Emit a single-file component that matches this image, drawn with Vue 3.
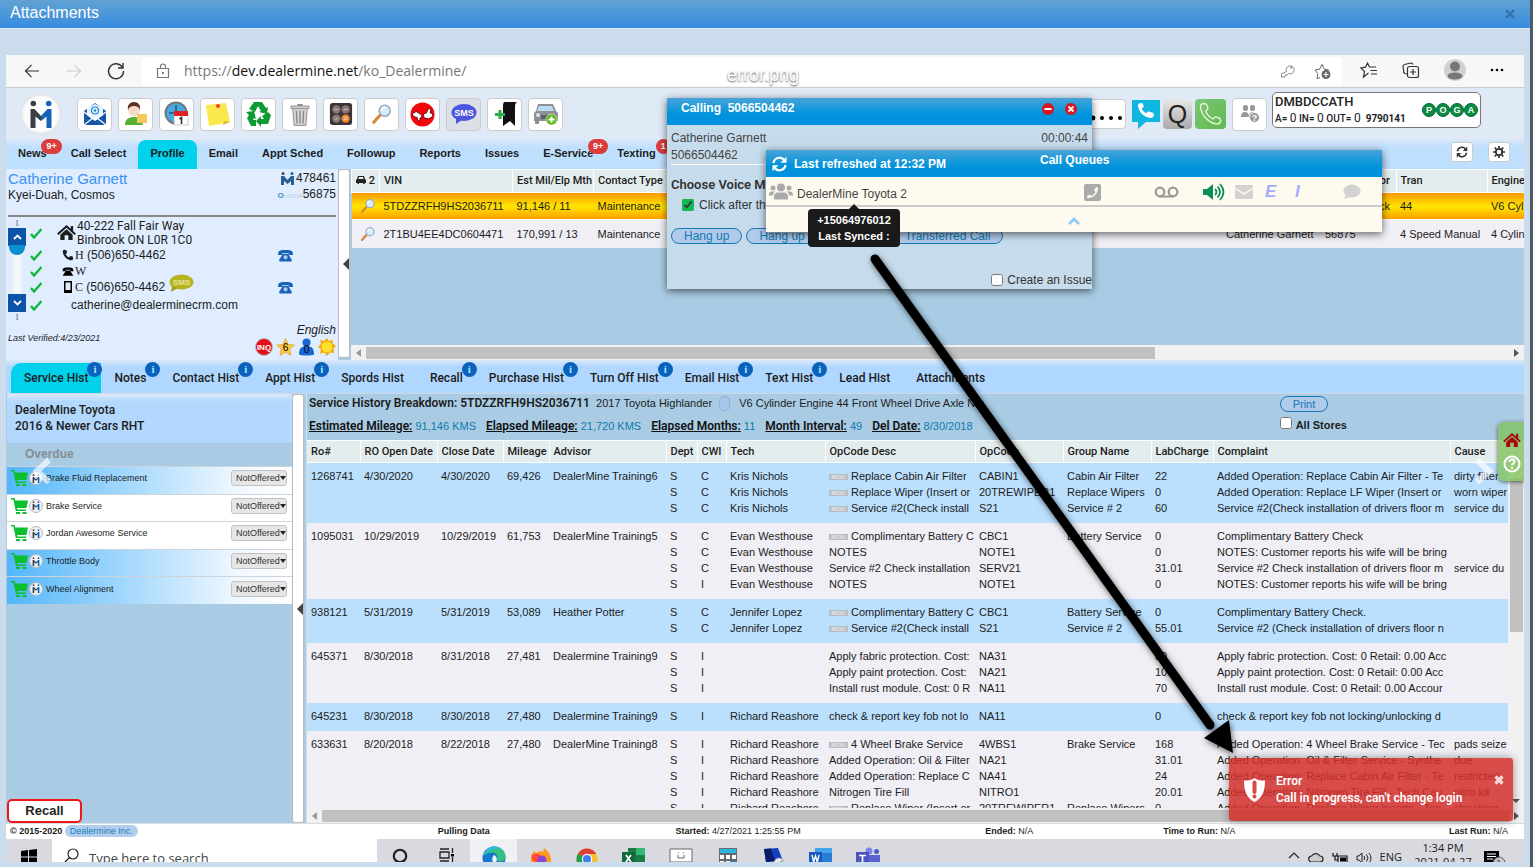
<template>
  <div class="page">
    <!-- shared icons -->
    <svg class="sprite" aria-hidden="true">
      <symbol id="lens" viewBox="0 0 24 24">
        <path d="M3 21l8-9" stroke="#d9843b" stroke-width="3.4" stroke-linecap="round" />
        <circle cx="15" cy="8.500" r="6" fill="#d8edfc" stroke="#9aabc4" stroke-width="1.800" />
        <path d="M11.500 8a4 4 0 0 1 4-3.500" fill="none" stroke="#fff" stroke-width="1.600" />
      </symbol>
      <symbol id="mine" viewBox="0 0 21 28">
        <path d="M0 9h4l6.500 7v5L5 16.500V28H0z" fill="#3b3f45" />
        <path d="M21 9h-4l-6.500 7v5l5.500-4.500V28h5z" fill="#1463b5" />
        <circle cx="2.800" cy="3.500" r="2.800" fill="#3b3f45" />
        <circle cx="18.200" cy="3.500" r="2.800" fill="#1463b5" />
      </symbol>
      <symbol id="tick" viewBox="0 0 12 12">
        <path d="M1 7l3 3.500L11.500 2" fill="none" stroke="#10b73a" stroke-width="2.400" />
      </symbol>
      <symbol id="desk-phone" viewBox="0 0 18 14">
        <path d="M1 5C1 1 5 1 9 1s8 0 8 4v1.500h-4.500V4.500h-7v2H1z" fill="#1b62b8" />
        <path d="M6 5.500h6l4 6.500c0 1-1 1.500-2 1.500H4c-1 0-2-.5-2-1.500z" fill="#1b62b8" />
        <circle cx="9" cy="9" r="2.200" fill="#a8cdf5" />
      </symbol>
      <symbol id="sync" viewBox="0 0 16 16">
        <path d="M2 7a6 6 0 0 1 10.500-3.200M14 9a6 6 0 0 1-10.500 3.200" fill="none" stroke="currentColor" stroke-width="2.200" />
        <path d="M15 .8v6H9zM1 15.200v-6h6z" fill="currentColor" />
      </symbol>
      <symbol id="house" viewBox="0 0 20 18">
        <path d="M10 1L0 10l1.500 1.600L10 4l8.500 7.600L20 10l-3-2.700V2h-2.500v3z" fill="currentColor" />
        <path d="M10 5.500L3.500 11.300V17H8v-5h4v5h4.500v-5.700z" fill="currentColor" />
      </symbol>
      <symbol id="group" viewBox="0 0 24 17">
        <g fill="currentColor">
          <circle cx="12" cy="4.500" r="4" /><circle cx="4" cy="5" r="2.500" /><circle cx="20" cy="5" r="2.500" />
          <path d="M5 16.500v-3c0-3 2-4 4-4h6c2 0 4 1 4 4v3zM0 12.500c0-3 1-4 3-4h3.500C4.500 9.500 4 11 4 12.500zM24 12.500c0-3-1-4-3-4h-3.500c2 1 2.500 2.500 2.500 4z" />
        </g>
      </symbol>
      <symbol id="handset" viewBox="0 0 16 16">
        <path d="M3 1l3 .6.8 3.400-2 1.600c.8 2 2.200 3.500 4.500 4.600l1.700-2 3.400.9.500 3.200c-.5 1.300-1.600 1.800-3 1.600C6.500 14.300 1.700 9.500 1 4c-.1-1.600.7-2.600 2-3z" fill="currentColor" />
      </symbol>
      <symbol id="cart" viewBox="0 0 18 18">
        <path d="M0 1h3.500l.8 2.500H17L15.500 11H6l.3 1.500H15v1.600H4.800L2.400 2.600H0z" fill="#0cbf2c" />
        <path d="M5 15h4v2H5zM11.500 15h4v2h-4z" fill="#0cbf2c" />
      </symbol>
    </svg>

    <main class="modal">
      <header class="modal-head">
        <h1>Attachments</h1>
        <button type="button" class="modal-close" aria-label="Close">
          <svg width="10" height="10" viewBox="0 0 10 10"><path d="M1 1l8 8M9 1L1 9" stroke="#3272ae" stroke-width="2.400" /></svg>
        </button>
      </header>

      <div class="shot">
        <!-- browser bar -->
        <div class="browser">
          <button type="button" class="plain" aria-label="Back">
            <svg width="16" height="14" viewBox="0 0 18 16"><path d="M17 8H2M8.500 1L1.500 8l7 7" fill="none" stroke="#333" stroke-width="1.300" /></svg>
          </button>
          <button type="button" class="plain" aria-label="Forward">
            <svg width="16" height="14" viewBox="0 0 18 16"><path d="M1 8h15M9.500 1l7 7-7 7" fill="none" stroke="#ccc" stroke-width="1.300" /></svg>
          </button>
          <button type="button" class="plain" aria-label="Reload">
            <svg width="18" height="18" viewBox="0 0 18 18"><path d="M15.500 5.500A7.500 7.500 0 1 0 16.500 9M16 1v5h-5" fill="none" stroke="#333" stroke-width="1.400" /></svg>
          </button>
          <div class="address">
            <svg width="14" height="16" viewBox="0 0 14 16"><path d="M1.500 5.500h11v9h-11zM4.500 5.500v-2a2.500 2.500 0 0 1 5 0v2" fill="none" stroke="#777" stroke-width="1.200" /><circle cx="7" cy="10" r="1" fill="#555" /></svg>
            <span class="url">https://<b>dev.dealermine.net</b>/ko_Dealermine/</span>
            <svg width="16" height="16" viewBox="0 0 16 16"><path d="M6.500 8.500a4 4 0 1 1 2 2L7 12H5v2H1.500v-3z" fill="none" stroke="#888" /><circle cx="11.200" cy="4.800" r="1" fill="#888" /></svg>
            <svg width="18" height="17" viewBox="0 0 18 17"><path d="M6 14.500l-3 1.200.8-5L1 7l4.500-.8L8 1.500l2.300 4.700L15 7" fill="none" stroke="#666" /><circle cx="12" cy="11.500" r="4.500" fill="#666" /><path d="M12 9v5M9.500 11.500h5" stroke="#fff" stroke-width="1.200" /></svg>
          </div>
          <div class="browser-tools">
            <svg width="18" height="16" viewBox="0 0 18 16"><path d="M8.500 11L3.500 15l1-5.500L1 6l4.500-.8L7.500 1l2 4H16M10.500 8.500H17M11 12h6" fill="none" stroke="#333" stroke-width="1.200" /></svg>
            <svg width="18" height="17" viewBox="0 0 18 17"><path d="M5 12L3 11.500a2 2 0 0 1-1.300-2.500L1 4.500a2 2 0 0 1 1.500-2L9 1a2 2 0 0 1 2 1.500" fill="none" stroke="#333" stroke-width="1.200" /><rect x="5.500" y="4.500" width="11" height="11" rx="2" fill="none" stroke="#333" stroke-width="1.200" /><path d="M11 7v6M8 10h6" stroke="#333" stroke-width="1.200" /></svg>
            <svg width="22" height="22" viewBox="0 0 22 22"><circle cx="11" cy="11" r="11" fill="#d4d0cd" /><circle cx="11" cy="7.500" r="5" fill="#777" /><ellipse cx="11" cy="17" rx="7.500" ry="3.500" fill="#777" /></svg>
            <svg width="14" height="4" viewBox="0 0 14 4"><circle cx="2" cy="2" r="1.300" /><circle cx="7" cy="2" r="1.300" /><circle cx="12" cy="2" r="1.300" /></svg>
          </div>
        </div>

        <!-- app toolbar -->
        <div class="toolbar">
          <span class="logo"><svg width="22" height="28"><use href="#mine" /></svg></span>
          <div class="tools">
            <button type="button" aria-label="Mail">
              <svg width="26" height="26" viewBox="0 0 26 26"><path d="M2 10L13 2l11 8v14H2z" fill="#1b5fae" /><path d="M5 7l8-4 8 4v9l-8 4-8-4z" fill="#e8f4fc" /><path d="M2 12l11 8 11-8v12H2z" fill="#1558a8" /><path d="M2 24l9-7M15 17l9 7M2 11l11 8 11-8" fill="none" stroke="#fff" stroke-width="1.200" /><circle cx="13" cy="9.500" r="3.500" fill="none" stroke="#1b86d8" stroke-width="1.200" /><circle cx="13" cy="9.500" r="1.300" fill="#1b86d8" /></svg>
            </button>
            <button type="button" aria-label="Contact note">
              <svg width="26" height="26" viewBox="0 0 26 26"><path d="M2 24c0-6 4-8 9-8s8 2 9 8z" fill="#55b034" /><circle cx="11" cy="9" r="6" fill="#f6d9c6" /><path d="M5 9c-1-5 2-8 6-8s7 3 6 8c-1-3-3-4-6-4s-5 1-6 4z" fill="#5d2f26" /><path d="M14 13h10v9H14z" fill="#f7c65c" /></svg>
            </button>
            <button type="button" aria-label="Schedule">
              <svg width="26" height="26" viewBox="0 0 26 26"><circle cx="12" cy="12" r="10.500" fill="#49a9df" stroke="#6f7881" stroke-width="2" /><path d="M12 4v8H5" stroke="#23577f" stroke-width="1.500" fill="none" /><path d="M10 12h14v12H10z" fill="#fff" stroke="#aaa" stroke-width=".6" /><path d="M10 10h14v5H10z" fill="#e01f26" /><path d="M15.500 18l2-1.500V23" stroke="#333" stroke-width="1.600" fill="none" /></svg>
            </button>
            <button type="button" aria-label="Notes">
              <svg width="26" height="26" viewBox="0 0 26 26"><path d="M1 4l20-2 4 19-9 2-12 2z" fill="#fbe84f" /><path d="M18 24l7-3-6-1z" fill="#d6b83a" /><circle cx="13" cy="5" r="2" fill="#e8442b" /></svg>
            </button>
            <button type="button" aria-label="Recycle">
              <svg width="26" height="26" viewBox="0 0 26 26"><g fill="#0d9c33"><path d="M8 1h8l4 6 2-1-1 7-8-2 2-1-3-5-3 6-6-3z" /><path d="M25 14l-3 9h-7v3l-5-6 5-5v3h3l-2-3 6-4z" /><path d="M0 11l8-1 2 8-2-1-1 2h3v6H5L1 17l2-3z" /></g></svg>
            </button>
            <button type="button" aria-label="Delete">
              <svg width="20" height="25" viewBox="0 0 22 26"><path d="M3 6h16l-1.500 19h-13z" fill="#d4d4d4" stroke="#888" /><path d="M7 9l.7 14M11 9v14M15 9l-.7 14" stroke="#888" stroke-width="1.500" /><path d="M1 3.500h20v3H1z" fill="#ccc" stroke="#888" stroke-width=".8" /><path d="M8 1.500h6v2H8z" fill="#888" /></svg>
            </button>
            <button type="button" aria-label="Calculator">
              <svg width="24" height="24" viewBox="0 0 26 26"><rect x="1" y="1" width="24" height="24" rx="3" fill="#3a3536" /><circle cx="8" cy="8" r="4.500" fill="#8b7873" /><circle cx="18" cy="8" r="4.500" fill="#8b7873" /><circle cx="8" cy="18" r="4.500" fill="#8b7873" /><circle cx="18" cy="18" r="4.500" fill="#f08a2c" /><path d="M6 8h4M16 8h4M16 17h4M16 19h4M7 17l2 2M9 17l-2 2" stroke="#ddd" stroke-width=".9" /></svg>
            </button>
            <button type="button" aria-label="Search"><svg width="22" height="22"><use href="#lens" /></svg></button>
            <button type="button" aria-label="Rating">
              <svg width="25" height="25" viewBox="0 0 26 26"><circle cx="13" cy="13" r="12.500" fill="#f3060b" /><path d="M2.500 12l4-2 5 3 1 3-2 .5-.5 3.500-2-1-.5-3-4-1z" fill="#fff" stroke="#400" stroke-width=".8" /><path d="M23.500 15l-4 2.500-5-1-.5-4 3-1 2.500-5 2 .5-.5 4.500 2.500.5z" fill="#fff" stroke="#400" stroke-width=".8" /></svg>
            </button>
            <button type="button" class="dim" aria-label="Text message">
              <svg width="26" height="22" viewBox="0 0 26 22"><ellipse cx="13" cy="9.500" rx="12.500" ry="8.500" fill="#4b55dd" /><path d="M5 15l0 6 6-4z" fill="#4b55dd" /><text x="13" y="13" text-anchor="middle" class="sms-text big" fill="#fff">SMS</text></svg>
            </button>
            <button type="button" aria-label="Bookmark">
              <svg width="26" height="26" viewBox="0 0 26 26"><path d="M12 1h13c-2 1-2 3-2 6v18l-5-5-7 5V6c0-2 0-3 1-5z" fill="#111" /><path d="M8 9v9M3 13.500h10" stroke="#2cae4c" stroke-width="3" /></svg>
            </button>
            <button type="button" aria-label="Add vehicle">
              <svg width="26" height="26" viewBox="0 0 26 26"><path d="M5 3h15l3 7 2 2v8h-2v3h-4v-3H6v3H2v-3H1v-8l2-2z" fill="#8d9196" /><path d="M6 5h13l2 5H4z" fill="#b9ddf0" /><path d="M8 14h10v4H8z" fill="#5d6165" /><circle cx="5" cy="14" r="2" fill="#dfe6ea" /><circle cx="18.500" cy="18.500" r="5.500" fill="#5fb81e" stroke="#fff" stroke-width=".6" /><path d="M18.500 15.500v6M15.500 18.500h6" stroke="#fff" stroke-width="1.800" /></svg>
            </button>
          </div>
          <div class="phone-tools">
            <button type="button" class="wide" aria-label="Password">
              <svg width="32" height="4" viewBox="0 0 32 4"><circle cx="3" cy="2" r="2.400" /><circle cx="12" cy="2" r="2" /><circle cx="21" cy="2" r="2" /><circle cx="30" cy="2" r="2" /></svg>
            </button>
            <button type="button" class="tile" aria-label="Call">
              <svg width="28" height="30" viewBox="0 0 28 30"><path d="M0 1h28v22H14l-8 7v-7H0z" fill="#0fb6e0" /><path d="M8 4l3 .6.8 3.400-2 1.600c.8 2 2.200 3.500 4.500 4.600l1.700-2 5.400 1.900.5 2.200c-.5 1.800-1.600 2.800-4 2.600C11.500 18 6.700 12.500 6 7c-.1-1.600.7-2.600 2-3z" fill="#fff" /></svg>
            </button>
            <button type="button" class="tile q">Q</button>
            <button type="button" class="tile green" aria-label="Dial">
              <svg width="24" height="26" viewBox="0 0 16 16"><path d="M3 1l2 .6 1 3-1.600 1.600c.8 2 2.600 4 5 5.100l1.600-1.500 3 1.200.5 2c-.5 1.300-1.600 1.800-3 1.600C6.500 14 1.700 9 1 3.500c-.1-1.300.7-2.300 2-2.500z" fill="none" stroke="#e7f7de" stroke-width=".9" /></svg>
            </button>
            <button type="button" class="users" aria-label="Agents">
              <svg width="20" height="18" viewBox="0 0 20 18"><g fill="#999"><rect x="3" y="0" width="5" height="6" rx="2" /><rect x="10" y="0" width="5" height="6" rx="2" /><path d="M1 12c0-4 2-5 4-5s4 1 4 5zM9 12c0-4 2-5 4-5s4 1 4 5z" /><circle cx="14.500" cy="12.500" r="5" stroke="#fff" /></g><text x="14.500" y="16" text-anchor="middle" class="tiny-q" fill="#fff">?</text></svg>
            </button>
            <div class="agent">
              <div>
                <div class="agent-name">DMBDCCATH</div>
                <div class="agent-stats">A= <i>0</i> IN= <i>0</i> OUT= <i>0</i> &nbsp;<b>9790141</b></div>
              </div>
              <div class="poga"><span v-for="l in 'POGA'" :key="l">{{ l }}</span></div>
            </div>
          </div>
        </div>

        <!-- main tabs -->
        <nav class="main-nav">
          <button v-for="t in mainTabs" :key="t.name" type="button" :class="{ active: t.name === mainTab }" @click="mainTab = t.name">
            {{ t.name }}<span v-if="t.badge" class="count">{{ t.badge }}</span>
          </button>
          <div class="nav-actions">
            <button type="button" aria-label="Refresh"><svg width="12" height="12"><use href="#sync" /></svg></button>
            <button type="button" aria-label="Settings">
              <svg width="12" height="12" viewBox="0 0 12 12"><circle cx="6" cy="6" r="3.200" fill="none" stroke="#333" stroke-width="1.800" /><path d="M6 0v2M6 10v2M0 6h2M10 6h2M1.700 1.700l1.500 1.500M8.800 8.800l1.500 1.500M1.700 10.300l1.500-1.500M8.800 3.200l1.500-1.500" stroke="#333" stroke-width="1.700" /></svg>
            </button>
          </div>
        </nav>

        <!-- customer + vehicles -->
        <section class="top">
          <div class="customer">
            <div class="who">
              <div>
                <a href="#" class="cust-name">Catherine Garnett</a>
                <div class="cust-alt">Kyei-Duah, Cosmos</div>
              </div>
              <div class="ids">
                <div><svg width="13" height="13" viewBox="0 0 13 13"><path d="M0 4h3l3.500 4L10 4h3v9h-3V9l-3.500 3L3 9v4H0z" fill="#2c5f94" /><circle cx="2" cy="1.500" r="1.500" fill="#444" /><circle cx="11" cy="1.500" r="1.500" fill="#1463b5" /></svg>478461</div>
                <div><span class="quorum"><em>O</em>UORUM</span>56875</div>
              </div>
            </div>
            <div class="contact">
              <div class="pager">
                <small>1</small>
                <button type="button" aria-label="Previous"><svg width="9" height="6" viewBox="0 0 9 6"><path d="M1 5l3.500-3.500L8 5" fill="none" stroke="#fff" stroke-width="1.800" /></svg></button>
                <span class="track"><span class="knob"></span></span>
                <button type="button" aria-label="Next"><svg width="9" height="6" viewBox="0 0 9 6"><path d="M1 1l3.500 3.500L8 1" fill="none" stroke="#fff" stroke-width="1.800" /></svg></button>
                <small>1</small>
              </div>
              <ul class="lines">
                <li class="tall">
                  <svg class="ok" width="12" height="12"><use href="#tick" /></svg>
                  <svg class="kind home" width="19" height="17"><use href="#house" /></svg>
                  <span>40-222 Fall Fair Way<br>Binbrook ON L0R 1C0</span>
                </li>
                <li>
                  <svg class="ok" width="12" height="12"><use href="#tick" /></svg>
                  <svg class="kind" width="12" height="12"><use href="#handset" /></svg>
                  <span><i>H</i> (506)650-4462</span>
                  <svg class="dial" width="17" height="13"><use href="#desk-phone" /></svg>
                </li>
                <li>
                  <svg class="ok" width="12" height="12"><use href="#tick" /></svg>
                  <svg class="kind" width="12" height="11" viewBox="0 0 18 14"><path d="M1 5C1 1 5 1 9 1s8 0 8 4v1.500h-4.500V4.500h-7v2H1zM6 5.500h6l5 8H1z" /></svg>
                  <span><i>W</i></span>
                </li>
                <li>
                  <svg class="ok" width="12" height="12"><use href="#tick" /></svg>
                  <svg class="kind" width="12" height="12" viewBox="0 0 12 12"><path d="M2 0h8v12H2zM3.500 1.500v7.500h5V1.500z" fill-rule="evenodd" /></svg>
                  <span><i>C</i> (506)650-4462</span>
                  <svg class="sms" width="25" height="19" viewBox="0 0 25 19"><ellipse cx="12.500" cy="8" rx="12" ry="7.500" fill="#b6b41f" /><path d="M3 12l-1 6 7-4z" fill="#a5a31a" /><text x="12.500" y="11" text-anchor="middle" class="sms-text" fill="#e6e59c">SMS</text></svg>
                  <svg class="dial" width="17" height="13"><use href="#desk-phone" /></svg>
                </li>
                <li class="mail">
                  <svg class="ok" width="12" height="12"><use href="#tick" /></svg>
                  <span>catherine@dealerminecrm.com</span>
                </li>
              </ul>
            </div>
            <div class="cust-foot">
              <em class="verified">Last Verified:4/23/2021</em>
              <div class="flags">
                <em>English</em>
                <div>
                  <svg width="18" height="18" viewBox="0 0 18 18"><circle cx="9" cy="9" r="8.500" fill="#e31019" stroke="#bbb" /><text x="9" y="12" text-anchor="middle" class="inq" fill="#fff">INQ</text></svg>
                  <svg width="19" height="18" viewBox="0 0 19 18"><path d="M9.500.5l2.700 5.800 6.300.7-4.700 4.200 1.300 6.300-5.600-3.200-5.600 3.200 1.300-6.300L.5 7l6.300-.7z" fill="#fcc63d" stroke="#d89e38" stroke-width=".6" /><text x="9.500" y="13" text-anchor="middle" class="flag-num">6</text></svg>
                  <svg width="17" height="18" viewBox="0 0 17 18"><circle cx="8.500" cy="4.500" r="4" fill="#1967d3" /><path d="M1 16c0-6 3-8 7.500-8s7.500 2 7.500 8c0 2-15 2-15 0z" fill="#1967d3" /><text x="8.500" y="15" text-anchor="middle" class="flag-num">0</text></svg>
                  <svg width="18" height="18" viewBox="0 0 18 18"><path d="M9 0l2 3 4-1-.5 3.500L18 8l-2.500 2.500L16 15l-4-.5L9 18l-2.500-3.500L2 15.500 3 11 0 9l3-3-1-4 4 1z" fill="#f8a80c" /><circle cx="9" cy="9" r="5.500" fill="#ffdf2e" /></svg>
                </div>
              </div>
            </div>
          </div>

          <button type="button" class="splitter" aria-label="Collapse customer"><span></span></button>

          <div class="vehicles">
            <div class="vehicle-body">
              <table>
                <colgroup>
                  <col style="width: 28px"><col style="width: 133px"><col style="width: 81px"><col><col style="width: 99px">
                  <col style="width: 38px"><col style="width: 37px"><col style="width: 91px"><col style="width: 37px">
                </colgroup>
                <thead>
                  <tr>
                    <th class="cars"><svg width="10" height="9" viewBox="0 0 10 9"><path d="M2 1h6l1 3 1 1v3H8.500v1H7V8H3v1H1.500V8H0V5l1-1zM3 2l-.6 2h5.200L7 2z" fill="#222" fill-rule="evenodd" /></svg> 2</th>
                    <th>VIN</th><th>Est Mil/Elp Mth</th><th>Contact Type</th><th></th><th></th><th>Color</th><th>Tran</th><th>Engine</th>
                  </tr>
                </thead>
                <tbody>
                  <tr v-for="v in vehicles" :key="v.vin" :class="{ chosen: v.chosen }">
                    <td><svg width="16" height="16"><use href="#lens" /></svg></td>
                    <td>{{ v.vin }}</td><td>{{ v.mileage }}</td><td>Maintenance</td><td>{{ v.owner }}</td><td>{{ v.id }}</td>
                    <td>{{ v.color }}</td><td>{{ v.tran }}</td><td>{{ v.engine }}</td>
                  </tr>
                </tbody>
              </table>
            </div>
            <div class="hbar"><span class="arrow-l"></span><span class="thumb short"></span><span class="gap"></span><span class="arrow-r"></span></div>
          </div>
        </section>

        <!-- history tabs -->
        <nav class="sub-nav">
          <button v-for="t in histTabs" :key="t.name" type="button" :class="{ active: t.name === histTab }" @click="histTab = t.name">
            {{ t.name }}<span v-if="t.info" class="info">i</span>
          </button>
        </nav>

        <section class="bottom">
          <aside class="offers">
            <div class="store">DealerMine Toyota<br>2016 &amp; Newer Cars RHT</div>
            <h2>Overdue</h2>
            <ul>
              <li v-for="o in offers" :key="o.name" :class="{ blue: o.blue }">
                <svg width="18" height="18"><use href="#cart" /></svg>
                <span class="chip"><svg width="8" height="9"><use href="#mine" /></svg></span>
                <label :for="o.id">{{ o.name }}</label>
                <span class="pick"><select :id="o.id"><option>NotOffered</option><option>Offered</option></select></span>
              </li>
            </ul>
            <button type="button" class="recall">Recall</button>
          </aside>

          <button type="button" class="splitter low" aria-label="Collapse offers"><span></span></button>

          <div class="history">
            <div class="hist-head">
              <div class="hist-info">
                <div><b>Service History Breakdown: 5TDZZRFH9HS2036711</b> &nbsp;2017 Toyota Highlander <span class="blank"></span> V6 Cylinder Engine 44 Front Wheel Drive Axle No:</div>
                <div class="stats"><span v-for="s in stats" :key="s[0]"><u>{{ s[0] }}:</u> {{ s[1] }}</span></div>
              </div>
              <div class="hist-tools">
                <button type="button" class="pill">Print</button>
                <label><input type="checkbox"> All Stores</label>
              </div>
            </div>
            <div class="grid-wrap">
              <div class="grid-scroll">
                <table class="grid">
                  <colgroup><col v-for="c in columns" :key="c.name" :style="{ width: c.width }"></colgroup>
                  <thead><tr><th v-for="c in columns" :key="c.name">{{ c.name }}</th></tr></thead>
                  <tbody>
                    <tr v-for="o in orders" :key="o.ro">
                      <td>{{ o.ro }}</td><td>{{ o.open }}</td><td>{{ o.close }}</td><td>{{ o.miles }}</td><td>{{ o.advisor }}</td>
                      <td><div v-for="n in o.lines.length" :key="n">S</div></td>
                      <td><div v-for="(l, n) in o.lines" :key="n">{{ l[0] }}</div></td>
                      <td><div v-for="n in o.lines.length" :key="n">{{ o.tech }}</div></td>
                      <td><div v-for="(l, n) in o.lines" :key="n"><span v-if="l[7]" class="menu-tag">MENU</span>{{ l[1] }}</div></td>
                      <td v-for="k in [2, 3, 4, 5, 6]" :key="k"><div v-for="(l, n) in o.lines" :key="n">{{ l[k] }}</div></td>
                    </tr>
                  </tbody>
                </table>
              </div>
              <div class="vbar"><span class="vthumb"></span><span class="arrow-d"></span></div>
            </div>
            <div class="hbar"><span class="arrow-l"></span><span class="thumb"></span><span class="arrow-r"></span></div>
          </div>
        </section>

        <!-- status bar -->
        <footer class="status">
          <span>© 2015-2020 <a href="#">Dealermine Inc.</a></span>
          <span>Pulling Data</span>
          <span>Started: <i>4/27/2021 1:25:55 PM</i></span>
          <span>Ended: <i>N/A</i></span>
          <span>Time to Run: <i>N/A</i></span>
          <span>Last Run: <i>N/A</i></span>
        </footer>

        <!-- windows taskbar -->
        <div class="taskbar">
          <button type="button" class="start" aria-label="Start"><svg width="16" height="16" viewBox="0 0 16 16"><path d="M0 2l7-1v6.500H0zM8 1l8-1v7.500H8zM0 8.500h7V15l-7-1zM8 8.500h8V16l-8-1z" /></svg></button>
          <label class="search">
            <svg width="14" height="14" viewBox="0 0 14 14"><circle cx="8" cy="6" r="5" fill="none" stroke="#222" stroke-width="1.200" /><path d="M4.500 9.500L0 14" stroke="#222" stroke-width="1.200" /></svg>
            <input type="text" placeholder="Type here to search" aria-label="Type here to search">
          </label>
          <div class="apps">
            <span><svg width="16" height="16" viewBox="0 0 16 16"><circle cx="8" cy="8" r="6.200" fill="none" stroke="#222" stroke-width="2.200" /></svg></span>
            <span><svg width="16" height="16" viewBox="0 0 16 16"><path d="M1 1h9M1 4h9v6H1zM1 13h9M13.500 0v5M13.500 9v6" fill="none" stroke="#222" stroke-width="1.300" /><path d="M12 6h3v2.500h-3z" /></svg></span>
            <span class="open"><svg class="edge" width="24" height="24" viewBox="0 0 24 24"><circle cx="12" cy="12" r="11.500" fill="#1677cf" /><path d="M1 10C3 3 8 .5 12.500.5 19 .5 23.500 5 23.500 11c0 5-8 6-9 3 3-4-1-8-5-7.500S2 9 1 10z" fill="#35c17f" /><path d="M1 10C3 3 8 .5 12.500.5c3 0 5 1 7 2.500C12 1 5 5 1 10z" fill="#31b6e6" /><path d="M12 9c-3 3-2 8 2 10h6c-4 1-6-1-5.500-5 1-1 0-4-2.500-5z" fill="#eaf4fb" /></svg></span>
            <span><svg width="22" height="22" viewBox="0 0 22 22"><path d="M2 6l2-3 2 2c3-2 5-2 7-1l1-4c4 3 7 7 7 12a10 10 0 0 1-20 0c0-2 0-4 1-6z" fill="#ff9a1f" /><path d="M2 7c3-1 5-2 8 0l4 3c-1 3-5 6-9 4-3-2-4-4-3-7z" fill="#ff4a35" /><circle cx="12" cy="12" r="4.500" fill="#8a46d6" /></svg></span>
            <span><svg width="22" height="22" viewBox="0 0 22 22"><circle cx="11" cy="11" r="10.500" fill="#f5c12e" /><path d="M11 11L2 5.500A10.500 10.500 0 0 1 20.300 6H11z" fill="#dd4034" /><path d="M11 11L2 5.500a10.500 10.500 0 0 0 8 16z" fill="#269b4b" /><circle cx="11" cy="11" r="5.200" fill="#fff" /><circle cx="11" cy="11" r="4" fill="#3d7ff0" /></svg></span>
            <span><svg width="24" height="22" viewBox="0 0 24 22"><path d="M6 0h17v22H6z" fill="#1d7b45" /><path d="M14 0h9v7h-9z" fill="#33b777" /><path d="M0 4h13v13H0z" fill="#0f6a38" /><path d="M4 7l5 7M9 7l-5 7" stroke="#fff" stroke-width="1.700" /></svg></span>
            <span><svg width="24" height="16" viewBox="0 0 24 16"><path d="M1 1h22v13H1z" fill="#fff" stroke="#666" /><path d="M9 5h1M14 5h1M9 7v3h6V7" stroke="#666" fill="none" /></svg></span>
            <span><svg width="18" height="22" viewBox="0 0 18 22"><path d="M0 0h18v22H0z" fill="#656b70" /><path d="M1 1h16v4H1z" fill="#2bb7df" /><path d="M1 7h4v4H1zM7 7h4v4H7zM13 7h4v4h-4zM1 13h4v4H1zM7 13h4v4H7z" fill="#fff" /><path d="M13 13h4v8h-4z" fill="#2186c6" /></svg></span>
            <span><svg width="22" height="20" viewBox="0 0 22 20"><path d="M1 1l14-1 5 13-17 1z" fill="#173fc0" /><path d="M1 1l7-.5L12 13l-9 1z" fill="#0a1d6d" /><circle cx="16" cy="15" r="5" fill="#e7eee7" stroke="#888" stroke-width=".6" /><path d="M13 15l2 2 4-4" fill="none" stroke="#3c9a3c" stroke-width="1.300" /></svg></span>
            <span><svg width="24" height="22" viewBox="0 0 24 22"><path d="M6 0h17v22H6z" fill="#2b7cd3" /><path d="M6 0h17v5H6z" fill="#41a5ee" /><path d="M0 4h13v13H0z" fill="#185abd" /><path d="M3 7l1.700 7L6.500 8l1.800 6L10 7" fill="none" stroke="#fff" stroke-width="1.400" /></svg></span>
            <span><svg width="24" height="22" viewBox="0 0 24 22"><circle cx="13" cy="3" r="3.500" fill="#7b83eb" /><circle cx="20.500" cy="3.500" r="2.500" fill="#5059c9" /><path d="M9 7h15v8c0 3-5 6-8 6s-7-1-7-6z" fill="#5b62d0" /><path d="M0 4h13v13H0z" fill="#4b53bc" /><path d="M3 7.500h7M6.500 7.500V14" stroke="#fff" stroke-width="1.700" /><circle cx="20" cy="18" r="4" fill="#8ec73e" /></svg></span>
          </div>
          <div class="tray">
            <svg width="12" height="7" viewBox="0 0 12 7"><path d="M1 6l5-5 5 5" fill="none" stroke="#222" stroke-width="1.200" /></svg>
            <svg width="16" height="11" viewBox="0 0 16 11"><path d="M4 10a3 3 0 0 1-.5-6 5 5 0 0 1 8.500 0 3 3 0 0 1 0 6z" fill="#ccc" stroke="#222" stroke-width="1.200" /></svg>
            <svg width="16" height="12" viewBox="0 0 16 12"><path d="M1 1v3h4V1M3 4v4h3M6 4h9v7H6z" fill="none" stroke="#111" stroke-width="1.200" /><path d="M8 5.500h6v4H8z" /></svg>
            <svg width="16" height="12" viewBox="0 0 16 12"><path d="M1 4h2l3-3v10L3 8H1zM8 4q1.500 2 0 4M10.500 2.500q3 3.500 0 7M13 1q4 5 0 10" fill="none" stroke="#222" /></svg>
            <span class="lang">ENG</span>
            <span class="clock">1:34 PM<br>2021-04-27</span>
            <svg class="notes" width="20" height="18" viewBox="0 0 20 18"><path d="M0 1h15v11H6l-3 3v-3H0z" /><path d="M3 4h9M3 6.500h9M3 9h6" stroke="#fff" /><circle cx="15" cy="13" r="6" fill="#c9cbd0" fill-opacity=".9" stroke="#555" /><path d="M15 10v6" stroke="#222" /></svg>
          </div>
        </div>

        <!-- floating layers -->
        <div class="caption">error.png</div>

        <div class="dialog calling">
          <div class="dialog-head">
            <strong>Calling &nbsp;5066504462</strong>
            <span class="dialog-btns">
              <button type="button" aria-label="Minimise"><svg width="12" height="12" viewBox="0 0 12 12"><circle cx="6" cy="6" r="6" fill="#d8141f" /><path d="M2.500 6h7" stroke="#fff" stroke-width="2" /></svg></button>
              <button type="button" aria-label="Close call"><svg width="12" height="12" viewBox="0 0 12 12"><circle cx="6" cy="6" r="6" fill="#d8141f" /><path d="M3.500 3.500l5 5M8.500 3.500l-5 5" stroke="#fff" stroke-width="1.900" /></svg></button>
            </span>
          </div>
          <div class="dialog-body">
            <div class="caller"><span>Catherine Garnett<br>5066504462</span><span>00:00:44</span></div>
            <strong class="voice">Choose Voice Mail</strong>
            <label class="beep"><input type="checkbox" checked> <span>Click after the beep</span></label>
            <div class="actions">
              <button type="button" class="pill">Hang up</button>
              <button type="button" class="pill">Hang up and Dispose</button>
              <button type="button" class="pill">Transferred Call</button>
            </div>
            <label class="issue"><input type="checkbox"> Create an Issue</label>
          </div>
        </div>

        <div class="dialog queues">
          <div class="dialog-head">
            <span class="refreshed"><svg width="17" height="16"><use href="#sync" /></svg><strong>Last refreshed at 12:32 PM</strong></span>
            <strong class="queue-title">Call Queues</strong>
          </div>
          <div class="queue-row">
            <svg class="grey" width="24" height="17"><use href="#group" /></svg>
            <span class="queue-name">DealerMine Toyota 2</span>
            <span class="queue-icons">
              <svg width="17" height="17" viewBox="0 0 17 17"><rect width="17" height="17" rx="2" fill="#aaa" /><path d="M12 3l2 .5c0 6-4 10.500-10.500 10.500L3 12l3-1.500 1.300 1.500c2-1 3.200-2.200 4.200-4.300L10 6.300z" fill="#fffaf0" /></svg>
              <svg class="vm" width="25" height="12" viewBox="0 0 25 12"><path d="M6 10.500h13" stroke="#999" stroke-width="2" /><circle cx="6" cy="6" r="4.300" fill="none" stroke="#999" stroke-width="2.300" /><circle cx="19" cy="6" r="4.300" fill="none" stroke="#999" stroke-width="2.300" /></svg>
              <svg class="vol" width="22" height="18" viewBox="0 0 22 18"><path d="M0 6h4l6-5v16l-6-5H0z" fill="#078e57" /><path d="M12 6q3 3 0 6M14.500 3.500q5 5.500 0 11M17 1q7 8 0 16" fill="none" stroke="#078e57" stroke-width="1.800" /></svg>
              <svg class="env" width="18" height="14" viewBox="0 0 18 14"><rect width="18" height="14" rx="1.500" fill="#d2d2d0" /><path d="M0 3l9 6 9-6" fill="none" stroke="#fffaf0" stroke-width="1.500" /></svg>
              <b class="letter">E</b><b class="letter">I</b>
              <svg class="bubble" width="18" height="16" viewBox="0 0 18 16"><ellipse cx="9" cy="7" rx="8.500" ry="6.500" fill="#d2d2d0" /><path d="M3 10l-2 5 6-2z" fill="#d2d2d0" /></svg>
            </span>
          </div>
          <button type="button" class="collapse" aria-label="Collapse queues"><svg width="12" height="8" viewBox="0 0 12 8"><path d="M1 7l5-5 5 5" fill="none" stroke="#8ccbf7" stroke-width="2.800" /></svg></button>
        </div>

        <div class="tip" role="tooltip">+15064976012<br>Last Synced :</div>

        <div class="side-help">
          <a href="#" aria-label="Home"><svg width="18" height="16"><use href="#house" /></svg></a>
          <a href="#" aria-label="Help"><svg width="18" height="18" viewBox="0 0 18 18"><circle cx="9" cy="9" r="7.500" fill="none" stroke="#fff" stroke-width="2" /><path d="M6.500 7c0-3.500 5-3 5-.3C11.500 8.500 9 8.300 9 10.500M9 12v2" fill="none" stroke="#fff" stroke-width="1.900" /></svg></a>
        </div>

        <svg class="chev left" width="20" height="28" viewBox="0 0 20 28"><path d="M17 3L5 14l12 11" fill="none" stroke="#fff" stroke-width="6" /></svg>
        <svg class="chev right" width="20" height="28" viewBox="0 0 20 28"><path d="M3 3l12 11L3 25" fill="none" stroke="#fff" stroke-width="6" /></svg>

        <div class="toast" role="alert">
          <svg width="21" height="24" viewBox="0 0 21 24"><path d="M10.500 0c3 2 6.500 2.800 10.500 2.500C21 14 18 20 10.500 24 3 20 0 14 0 2.500 4 2.800 7.500 2 10.500 0z" fill="#fff" /><path d="M10.500 4.500V14" stroke="#d84b46" stroke-width="4" stroke-linecap="round" /><circle cx="10.500" cy="18.500" r="2" fill="#d84b46" /></svg>
          <strong>Error<br>Call in progress, can't change login</strong>
          <button type="button" aria-label="Dismiss"><svg width="10" height="10" viewBox="0 0 10 10"><path d="M1.500 1.500l7 7M8.500 1.500l-7 7" stroke="#f6dad9" stroke-width="3.200" /></svg></button>
        </div>

        <svg class="pointer" width="380" height="510" viewBox="0 0 380 510">
          <path d="M15 14L350 480" stroke="#000" stroke-width="9" stroke-linecap="round" />
          <path d="M373 508L344 493 369 475z" />
        </svg>
      </div>
    </main>
    <div class="behind"></div>
  </div>
</template>

<script setup>
import { ref } from 'vue'

const mainTab = ref('Profile')
const histTab = ref('Service Hist')

const mainTabs = [
  { name: 'News', badge: '9+' },
  { name: 'Call Select' },
  { name: 'Profile' },
  { name: 'Email' },
  { name: 'Appt Sched' },
  { name: 'Followup' },
  { name: 'Reports' },
  { name: 'Issues' },
  { name: 'E-Service', badge: '9+' },
  { name: 'Texting', badge: '1' }
]

const histTabs = [
  { name: 'Service Hist', info: true },
  { name: 'Notes', info: true },
  { name: 'Contact Hist', info: true },
  { name: 'Appt Hist', info: true },
  { name: 'Spords Hist' },
  { name: 'Recall', info: true },
  { name: 'Purchase Hist', info: true },
  { name: 'Turn Off Hist', info: true },
  { name: 'Email Hist', info: true },
  { name: 'Text Hist', info: true },
  { name: 'Lead Hist' },
  { name: 'Attachments' }
]

const vehicles = [
  { vin: '5TDZZRFH9HS2036711', mileage: '91,146 / 11', owner: 'Catherine Garnett', id: '56875', color: 'Black', tran: '44', engine: 'V6 Cyl', chosen: true },
  { vin: '2T1BU4EE4DC0604471', mileage: '170,991 / 13', owner: 'Catherine Garnett', id: '56875', color: '', tran: '4 Speed Manual', engine: '4 Cylin' }
]

const offers = [
  { id: 'offer1', name: 'Brake Fluid Replacement', blue: true },
  { id: 'offer2', name: 'Brake Service' },
  { id: 'offer3', name: 'Jordan Awesome Service' },
  { id: 'offer4', name: 'Throttle Body', blue: true },
  { id: 'offer5', name: 'Wheel Alignment', blue: true }
]

const stats = [
  ['Estimated Mileage', '91,146 KMS'],
  ['Elapsed Mileage', '21,720 KMS'],
  ['Elapsed Months', '11'],
  ['Month Interval', '49'],
  ['Del Date', '8/30/2018']
]

const columns = [
  { name: 'Ro#', width: '53px' },
  { name: 'RO Open Date', width: '77px' },
  { name: 'Close Date', width: '66px' },
  { name: 'Mileage', width: '46px' },
  { name: 'Advisor', width: '117px' },
  { name: 'Dept', width: '31px' },
  { name: 'CWI', width: '29px' },
  { name: 'Tech', width: '99px' },
  { name: 'OpCode Desc', width: '150px' },
  { name: 'OpCode', width: '88px' },
  { name: 'Group Name', width: '88px' },
  { name: 'LabCharge', width: '62px' },
  { name: 'Complaint', width: 'auto' },
  { name: 'Cause', width: '58px' }
]

// line: cwi, description, opcode, group, labour, complaint, cause, has menu tag
const orders = [
  {
    ro: '1268741', open: '4/30/2020', close: '4/30/2020', miles: '69,426', advisor: 'DealerMine Training6', tech: 'Kris Nichols',
    lines: [
      ['C', 'Replace Cabin Air Filter', 'CABIN1', 'Cabin Air Filter', '22', 'Added Operation: Replace Cabin Air Filter - Te', 'dirty filter', true],
      ['C', 'Replace Wiper (Insert or', '20TREWIPER1', 'Replace Wipers', '0', 'Added Operation: Replace LF Wiper (Insert or', 'worn wiper', true],
      ['C', 'Service #2(Check install', 'S21', 'Service # 2', '60', 'Service #2(Check installation of drivers floor m', 'service du', true]
    ]
  },
  {
    ro: '1095031', open: '10/29/2019', close: '10/29/2019', miles: '61,753', advisor: 'DealerMine Training5', tech: 'Evan Westhouse',
    lines: [
      ['C', 'Complimentary Battery C', 'CBC1', 'Battery Service', '0', 'Complimentary Battery Check', '', true],
      ['C', 'NOTES', 'NOTE1', '', '0', 'NOTES: Customer reports his wife will be bring', ''],
      ['C', 'Service #2 Check installation', 'SERV21', '', '31.01', 'Service #2 Check installation of drivers floor m', 'service du'],
      ['I', 'NOTES', 'NOTE1', '', '0', 'NOTES: Customer reports his wife will be bring', '']
    ]
  },
  {
    ro: '938121', open: '5/31/2019', close: '5/31/2019', miles: '53,089', advisor: 'Heather Potter', tech: 'Jennifer Lopez',
    lines: [
      ['C', 'Complimentary Battery C', 'CBC1', 'Battery Service', '0', 'Complimentary Battery Check.', '', true],
      ['C', 'Service #2(Check install', 'S21', 'Service # 2', '55.01', 'Service #2 (Check installation of drivers floor n', '', true]
    ]
  },
  {
    ro: '645371', open: '8/30/2018', close: '8/31/2018', miles: '27,481', advisor: 'Dealermine Training9', tech: '',
    lines: [
      ['I', 'Apply fabric protection. Cost:', 'NA31', '', '80', 'Apply fabric protection. Cost: 0 Retail: 0.00 Acc', ''],
      ['I', 'Apply paint protection. Cost:', 'NA21', '', '100', 'Apply paint protection. Cost: 0 Retail: 0.00 Acc', ''],
      ['I', 'Install rust module. Cost: 0 R', 'NA11', '', '70', 'Install rust module. Cost: 0 Retail: 0.00 Accour', '']
    ]
  },
  {
    ro: '645231', open: '8/30/2018', close: '8/30/2018', miles: '27,480', advisor: 'Dealermine Training9', tech: 'Richard Reashore',
    lines: [
      ['I', 'check & report key fob not lo', 'NA11', '', '0', 'check & report key fob not locking/unlocking d', '']
    ]
  },
  {
    ro: '633631', open: '8/20/2018', close: '8/22/2018', miles: '27,480', advisor: 'DealerMine Training8', tech: 'Richard Reashore',
    lines: [
      ['I', '4 Wheel Brake Service', '4WBS1', 'Brake Service', '168', 'Added Operation: 4 Wheel Brake Service - Tec', 'pads seize', true],
      ['I', 'Added Operation: Oil & Filter', 'NA21', '', '31.01', 'Added Operation: Oil & Filter Service - Synthe', 'due'],
      ['I', 'Added Operation: Replace C', 'NA41', '', '24', 'Added Operation: Replace Cabin Air Filter - Te', 'restricted'],
      ['I', 'Nitrogen Tire Fill', 'NITRO1', '', '20.01', 'Added Operation: Nitrogen Tire Fill - Tech Cau', 'nitro kit'],
      ['I', 'Replace Wiper (Insert or', '20TREWIPER1', 'Replace Wipers', '0', 'Added Operation: Replace Wiper inserts - Tec', 'streaking', true]
    ]
  }
]
</script>

<style>
body {
  margin: 0;
  overflow: hidden;
}
</style>

<style scoped>
* {
  box-sizing: border-box;
}
.page {
  display: flex;
  height: 100vh;
  font-family: "Liberation Sans", Arial, sans-serif;
  font-size: 11px;
  line-height: 16px;
  color: #1c1c1c;
}
.sprite {
  position: absolute;
  width: 0;
  height: 0;
}
button {
  font: inherit;
  color: inherit;
  padding: 0;
  border: 0;
  background: none;
  cursor: pointer;
}
svg {
  flex: none;
  overflow: visible;
}
ul, h1, h2 {
  margin: 0;
  padding: 0;
  list-style: none;
}
.behind {
  width: 3px;
  background: #4e5a66;
}
.modal {
  flex: 1;
  min-width: 0;
  display: flex;
  flex-direction: column;
  background: #cbdced;
}
.modal-head {
  height: 29px;
  padding: 0 15px 3px 10px;
  display: flex;
  align-items: center;
  justify-content: space-between;
  background: linear-gradient(#62a2d3, #368cdf);
  border-bottom: 1px solid #e4eef8;
}
.modal-head h1 {
  font: 16px/20px "Liberation Sans", sans-serif;
  color: #fff;
}
.modal-close {
  padding-top: 5px;
}
.shot {
  position: relative;
  flex: 1;
  min-height: 0;
  margin: 26px 6px 5px;
  display: flex;
  flex-direction: column;
  overflow: hidden;
  background: #a9cce4;
}

/* browser bar */
.browser {
  flex: none;
  height: 33px;
  display: flex;
  align-items: center;
  background: #f7f7f7;
  border-bottom: 1px solid #ccc;
}
.plain {
  width: 42px;
  height: 30px;
  display: grid;
  place-items: center;
}
.plain:first-child {
  margin-left: 5px;
}
.address {
  flex: 1;
  height: 29px;
  margin-left: 5px;
  padding: 0 10px 0 14px;
  display: flex;
  align-items: center;
  gap: 18px;
  background: #fff;
  border-radius: 4px;
}
.url {
  flex: 1;
  margin-left: -4px;
  font: 14px/20px "Open Sans", "Noto Sans", sans-serif;
  color: #777;
}
.url b {
  font-weight: 400;
  color: #111;
}
.browser-tools {
  display: flex;
  align-items: center;
  gap: 24px;
  padding: 0 20px 2px 18px;
}

/* toolbar */
.toolbar {
  flex: none;
  height: 52px;
  display: flex;
  align-items: center;
  padding: 0 43px 0 15px;
  background: #e0eaf7;
}
.logo {
  width: 40px;
  height: 40px;
  margin-right: 16px;
  display: grid;
  place-items: center;
  border-radius: 50%;
  background: #fbfcfd;
  box-shadow: inset 0 0 3px #bbb;
}
.tools {
  display: flex;
  gap: 6px;
}
.tools button,
.phone-tools .users,
.phone-tools .wide {
  width: 35px;
  height: 33px;
  display: grid;
  place-items: center;
  background: #fff;
  border: 1px solid #ccc;
  border-radius: 4px;
}
.tools .dim {
  background: #dcdfe6;
}
.sms-text {
  font: bold 8px "Liberation Sans", sans-serif;
}
.sms-text.big {
  font-size: 9px;
}
.tiny-q {
  font: bold 9px "Liberation Sans", sans-serif;
}
.phone-tools {
  margin-left: auto;
  display: flex;
  align-items: center;
  gap: 3px;
}
.phone-tools .wide {
  width: 60px;
  height: 30px;
  justify-items: end;
  padding: 8px 3px 0 0;
  margin-right: 2px;
}
.tile {
  width: 29px;
  height: 30px;
  border-radius: 4px;
}
.tile.q {
  background: linear-gradient(#e8e8e8, #aaa);
  font: 25px/28px "Liberation Sans", sans-serif;
  color: #222;
}
.tile.green {
  width: 31px;
  display: grid;
  place-items: center;
  background: linear-gradient(135deg, #7cc576, #62b94e);
}
.phone-tools .users {
  margin: 0 2px 0 3px;
}
.agent {
  width: 209px;
  height: 36px;
  margin-bottom: 8px;
  padding: 0 2px;
  display: flex;
  align-items: center;
  justify-content: space-between;
  background: #fff;
  border: 1px solid #777;
  border-radius: 5px;
  color: #222;
  font-family: Roboto, sans-serif;
  white-space: nowrap;
}
.agent-name {
  font-size: 13px;
  font-weight: 500;
}
.agent-stats {
  font-size: 10px;
  font-weight: 500;
}
.agent-stats i {
  font-style: normal;
  font-size: 12px;
  font-weight: 400;
}
.poga {
  display: flex;
}
.poga span {
  width: 14px;
  height: 14px;
  border-radius: 50%;
  background: #0a8b3f;
  border: 1px solid #064;
  color: #fff;
  font: bold 9px/12px "Liberation Sans", sans-serif;
  text-align: center;
}

/* tabs */
.main-nav {
  flex: none;
  height: 29px;
  display: flex;
  align-items: stretch;
  background: linear-gradient(#d5e6fa, #bfdffe 8px);
}
.main-nav > button {
  position: relative;
  padding: 0 12px 3px;
  font-weight: 700;
}
.main-nav > button.active {
  background: #00d2ec;
  border-radius: 8px 8px 0 0;
}
.count {
  position: absolute;
  top: -1px;
  right: -3px;
  padding: 0 5px;
  border-radius: 8px;
  background: #dc3c3c;
  color: #fff;
  font: bold 9px/15px "Liberation Sans", sans-serif;
}
.nav-actions {
  margin-left: auto;
  padding: 2px 14px 0 0;
  display: flex;
  gap: 15px;
}
.nav-actions button {
  width: 22px;
  height: 20px;
  display: grid;
  place-items: center;
  background: #fff;
  border: 1px solid #ccc;
  border-radius: 3px;
  color: #333;
}

.top {
  flex: none;
  height: 191px;
  display: flex;
}
.customer {
  width: 332px;
  flex: none;
  padding: 1px 2px 4px;
  display: flex;
  flex-direction: column;
  background: #dfedff;
}
.who {
  display: flex;
  justify-content: space-between;
  height: 49px;
  border-bottom: 2px solid #888;
}
.cust-name {
  font-size: 15px;
  line-height: 18px;
  color: #3b92f0;
  text-decoration: none;
}
.cust-alt {
  font-size: 12px;
  line-height: 14px;
}
.ids {
  text-align: right;
  font-size: 12px;
  line-height: 16px;
}
.ids svg {
  vertical-align: -3px;
  margin-right: 2px;
}
.quorum {
  font-size: 5px;
  color: #b8cde0;
}
.quorum em {
  font: bold 8px "Liberation Sans", sans-serif;
  color: #3a93b5;
}
.contact {
  display: flex;
  padding-top: 1px;
}
.pager {
  width: 18px;
  display: flex;
  flex-direction: column;
  align-items: center;
}
.pager small {
  font: 9px/10px "Liberation Serif", serif;
  color: #666;
}
.pager button {
  width: 18px;
  height: 18px;
  display: grid;
  place-items: center;
  background: #0a55a8;
}
.track {
  position: relative;
  width: 8px;
  height: 48px;
  background: #f4f6f8;
  border-radius: 0 0 4px 4px;
}
.knob {
  position: absolute;
  top: -7px;
  left: -4px;
  width: 16px;
  height: 16px;
  border-radius: 50%;
  background: #0b8fd0;
  clip-path: inset(6px 0 0 0);
}
.lines {
  flex: 1;
}
.lines li {
  height: 16px;
  display: flex;
  align-items: center;
}
.lines .tall {
  height: 29px;
  line-height: 14px;
}
.ok {
  margin: 0 20px 0 4px;
}
.kind {
  margin-right: 1px;
}
.lines .home {
  margin-left: -5px;
}
.lines i {
  font: 12px "Liberation Serif", serif;
}
.lines span {
  font-size: 12px;
}
.lines .tall span {
  font-family: Roboto, sans-serif;
}
.lines .sms {
  margin: -8px 0 0 4px;
}
.dial {
  margin: 0 42px 0 auto;
}
.lines .mail {
  height: 19px;
}
.lines .mail span {
  margin-left: 9px;
}
.cust-foot {
  margin-top: auto;
  display: flex;
  justify-content: space-between;
}
.verified {
  font-size: 9px;
  padding-top: 8px;
}
.flags {
  text-align: right;
}
.flags > em {
  font-size: 12px;
}
.flags > div {
  display: flex;
  gap: 3px;
}
.inq {
  font: bold 8px "Liberation Sans", sans-serif;
}
.flag-num {
  font-size: 10px;
}
.splitter {
  flex: none;
  width: 12px;
  margin: 0 1px 2px 0;
  display: flex;
  align-items: center;
  justify-content: flex-end;
  background: #fff;
  border: 1px solid #bbb;
  border-radius: 3px;
}
.splitter span {
  border: 6px solid transparent;
  border-left: 0;
  border-right-color: #444;
}

/* vehicles */
.vehicles {
  flex: 1;
  min-width: 0;
  display: flex;
  flex-direction: column;
}
.vehicle-body {
  flex: 1;
  overflow: hidden;
}
table {
  width: 100%;
  table-layout: fixed;
  border-collapse: collapse;
}
th,
td {
  padding: 0 0 0 4px;
  text-align: left;
  white-space: nowrap;
  overflow: hidden;
}
th {
  height: 23px;
  background: #e4eded;
  border: 1px solid #fff;
  border-width: 1px 0 1px 1px;
  font: 500 11px/16px Roboto, sans-serif;
}
.vehicles td {
  height: 28px;
  background: #f0eff5;
}
.vehicles td svg {
  display: block;
  margin: 0 auto;
}
.vehicles .chosen td {
  height: 27px;
  background: linear-gradient(#fe9b00, #ffe500 50%, #fe9b00);
  border-bottom: 1px solid #fff;
}
.hbar {
  flex: none;
  height: 15px;
  display: flex;
  align-items: center;
  background: #f1f1f1;
}
.hbar .thumb {
  flex: 1;
  height: 12px;
  background: #c1c1c1;
}
.hbar .short {
  flex: 789;
}
.hbar .gap {
  flex: 354;
}
.arrow-l,
.arrow-r {
  width: 5px;
  margin: 0 5px;
  border: 4px solid transparent;
  border-left: 0;
  border-right: 5px solid #999;
}
.arrow-r {
  border-right: 0;
  border-left: 5px solid #555;
}

/* history tabs */
.sub-nav {
  flex: none;
  height: 34px;
  display: flex;
  padding: 3px 0 0 5px;
  background: linear-gradient(#dbe9f8, #b0d7ff 7px);
  border-bottom: 1px solid #d0d8e0;
}
.sub-nav button {
  position: relative;
  padding: 0 13px;
  font: 500 12px/16px Roboto, sans-serif;
}
.sub-nav .active {
  background: #00d2ec;
  border-top-left-radius: 10px;
}
.info {
  position: absolute;
  top: -1px;
  right: -1px;
  width: 15px;
  height: 15px;
  border-radius: 50%;
  background: #0a62bd;
  color: #9fe4ff;
  font: bold 11px/15px "Liberation Serif", serif;
  text-align: center;
}

.bottom {
  flex: 1;
  min-height: 0;
  display: flex;
}
.offers {
  width: 285px;
  flex: none;
  margin-left: 1px;
  display: flex;
  flex-direction: column;
}
.store {
  padding: 8px 8px 9px;
  background: linear-gradient(#d8e8fa, #b2d8fe 8px);
  font: 500 12px/16px Roboto, sans-serif;
  border-radius: 2px;
}
.offers h2 {
  height: 23px;
  padding-left: 18px;
  font-size: 12px;
  line-height: 22px;
  font-weight: 700;
  color: #848c93;
}
.offers ul {
  height: 138px;
  display: grid;
  grid-template-rows: repeat(5, 1fr);
}
.offers li {
  display: flex;
  align-items: center;
  padding: 0 5px 4px 4px;
  background: #fff;
  border-top: 1px solid #ccd3da;
  font-size: 9px;
  line-height: 12px;
}
.offers .blue {
  background: linear-gradient(90deg, #52b6fa, #eef7ff 80%, #fff);
}
.offers label {
  flex: 1;
  padding-left: 3px;
}
.chip {
  width: 14px;
  height: 14px;
  display: grid;
  place-items: center;
  border-radius: 50%;
  background: #f0f1f3;
  border: 1px solid #b5bac0;
}
.pick {
  display: flex;
  align-items: center;
  border: 1px solid #c2c2c2;
  border-radius: 3px;
  background: #e6e6e6;
}
.pick select {
  width: 48px;
  height: 14px;
  padding: 0 0 0 4px;
  border: 0;
  background: none;
  appearance: none;
  font: 9px/14px "Liberation Sans", sans-serif;
  color: #333;
}
.pick::after {
  content: "";
  width: 0;
  border: 3px solid transparent;
  border-top: 4px solid #222;
  border-bottom: 0;
}
.recall {
  width: 75px;
  height: 24px;
  margin-top: auto;
  background: #fff;
  border: 2px solid #f01818;
  border-radius: 5px;
  font: bold 13px/18px "Liberation Sans", sans-serif;
  color: #222;
}
.splitter.low {
  margin: 0 2px 0 0;
}
.history {
  flex: 1;
  min-width: 0;
  display: flex;
  flex-direction: column;
  border-left: 1px solid #d8dde2;
}
.hist-head {
  height: 46px;
  flex: none;
  display: flex;
  justify-content: space-between;
  padding: 1px 177px 0 2px;
  white-space: nowrap;
}
.hist-info b,
.stats u {
  font: 600 12px/16px Roboto, sans-serif;
}
.hist-info > div + div {
  margin-top: 7px;
}
.blank {
  display: inline-block;
  width: 11px;
  height: 15px;
  margin: 0 6px 0 4px;
  vertical-align: -4px;
  background: #a9c6ea;
  border: 1px solid #8fb0dd;
  border-radius: 5px;
}
.stats {
  display: flex;
  gap: 10px;
  color: #0d7cab;
}
.stats u {
  color: #111;
}
.pill {
  height: 16px;
  padding: 0 12px;
  border: 1px solid #1479b4;
  border-radius: 8px;
  background: #b1c9ea;
  color: #0e7cb5;
  line-height: 14px;
}
.hist-tools {
  display: flex;
  flex-direction: column;
  align-items: flex-start;
  gap: 5px;
  padding-top: 1px;
}
.hist-tools label {
  display: flex;
  gap: 4px;
  font-weight: 700;
}
input[type="checkbox"] {
  width: 12px;
  height: 12px;
  margin: 0;
}
.grid-wrap {
  flex: 1;
  min-height: 0;
  display: flex;
}
.grid-scroll {
  flex: 1;
  min-width: 0;
  overflow: hidden;
  background: #f0eff5;
}
.grid th {
  height: 22px;
}
.grid th:first-child {
  border-left: 0;
}
.grid td {
  padding: 5px 0 7px 4px;
  vertical-align: top;
}
.grid td div {
  height: 16px;
}
.grid tbody tr:nth-child(1),
.grid tbody tr:nth-child(3),
.grid tbody tr:nth-child(5) {
  background: #bbe0fe;
}
.menu-tag {
  display: inline-block;
  width: 19px;
  height: 6px;
  margin-right: 3px;
  background: #b9bcc0;
  color: #e6e6e6;
  font: bold 5px/6px "Liberation Sans", sans-serif;
  text-align: center;
  vertical-align: 1px;
}
.vbar {
  width: 16px;
  display: flex;
  flex-direction: column;
  align-items: center;
  background: #f1f1f1;
  padding: 38px 0 5px;
}
.vthumb {
  width: 13px;
  height: 154px;
  background: #c1c1c1;
}
.arrow-d {
  margin-top: auto;
  border: 4px solid transparent;
  border-top-color: #555;
  border-bottom: 0;
}

.status {
  flex: none;
  height: 16px;
  padding: 0 16px 0 4px;
  display: grid;
  grid-template-columns: 428fr 238fr 310fr 178fr 345fr 0;
  background: #fff;
  border-top: 1px solid #d9dde2;
  font: bold 9px/15px "Liberation Sans", sans-serif;
}
.status span {
  white-space: nowrap;
}
.status span:last-child {
  justify-self: end;
}
.status i {
  font-style: normal;
  font-weight: 400;
}
.status a {
  display: inline-block;
  padding: 0 5px;
  line-height: 12px;
  border-radius: 6px;
  background: #b3cdee;
  color: #1680b8;
  font-weight: 400;
  text-decoration: none;
}

/* taskbar */
.taskbar {
  flex: none;
  height: 23px;
  display: flex;
  align-items: flex-start;
  overflow: hidden;
  background: #d9dae0;
}
.start {
  width: 46px;
  height: 40px;
}
.search {
  width: 325px;
  height: 40px;
  padding: 9px 0 0 13px;
  display: flex;
  align-items: flex-start;
  gap: 10px;
  background: #fff;
}
.search input {
  border: 0;
  padding: 0;
  height: 20px;
  outline: 0;
  font: 13px/20px "Open Sans", "Noto Sans", sans-serif;
}
.search input::placeholder {
  color: #444;
}
.apps {
  display: flex;
  width: 514px;
}
.apps span {
  flex: 1;
  height: 40px;
  padding-top: 9px;
  display: grid;
  justify-items: center;
  align-items: start;
}
.apps .open {
  padding-top: 7px;
  background: #f0f1f4;
}
.tray {
  margin-left: auto;
  padding: 13px 20px 0 0;
  display: flex;
  align-items: flex-start;
  gap: 8px;
  font: 11px/14px "Open Sans", "Noto Sans", sans-serif;
}
.lang {
  margin-top: -2px;
}
.clock {
  width: 66px;
  margin-top: -11px;
  text-align: center;
}
.tray .notes {
  margin-top: -2px;
}

/* layers */
.caption {
  position: absolute;
  top: 10px;
  left: 0;
  right: 4px;
  text-align: center;
  color: #fff;
  font: 18px/20px "Liberation Sans", sans-serif;
  text-shadow: 0 1px 2px #555;
  pointer-events: none;
}
.dialog {
  position: absolute;
  box-shadow: 0 2px 8px rgba(0, 0, 0, .6);
}
.dialog-head {
  height: 27px;
  display: flex;
  background: linear-gradient(#47a4d8, #0093db 60%, #0090e0);
  color: #fff;
}
.calling {
  left: 661px;
  top: 43px;
  width: 425px;
  height: 191px;
  background: #c6dcec;
  font-size: 12px;
}
.calling .dialog-head {
  justify-content: space-between;
  padding: 2px 15px 0 14px;
}
.dialog-btns {
  display: flex;
  gap: 11px;
}
.dialog-btns button {
  display: flex;
  padding-top: 3px;
}
.dialog-body {
  padding: 5px 0 0 4px;
  color: #333;
}
.caller {
  display: flex;
  justify-content: space-between;
  margin-right: 4px;
  border-bottom: 1px solid #fff;
  line-height: 17px;
  color: #444;
}
.voice {
  display: block;
  margin-top: 12px;
  font: 600 13px/16px Roboto, sans-serif;
}
.beep {
  display: flex;
  align-items: center;
  gap: 5px;
  margin: 4px 0 0 11px;
}
.beep input {
  accent-color: #10bb55;
}
.actions {
  display: flex;
  gap: 4px;
  margin-top: 15px;
}
.issue {
  display: flex;
  align-items: center;
  justify-content: flex-end;
  gap: 4px;
  margin-top: 28px;
}
.queues {
  left: 760px;
  top: 95px;
  width: 616px;
  height: 82px;
  background: #fffaf0;
}
.queues .dialog-head {
  padding: 0 5px;
}
.queues strong {
  font: bold 12px/20px "Liberation Sans", sans-serif;
}
.refreshed {
  display: flex;
  align-items: center;
  gap: 6px;
  width: 269px;
}
.queue-row {
  height: 30px;
  padding: 0 25px 0 3px;
  display: flex;
  align-items: center;
  border-bottom: 2px solid #ccc;
}
.grey {
  color: #aaa;
}
.queue-name {
  margin-left: 4px;
  padding-top: 6px;
  font-size: 12px;
  color: #444;
}
.queue-icons {
  margin-left: auto;
  padding-top: 2px;
  display: flex;
  align-items: center;
}
.vm {
  margin-left: 53px;
}
.vol {
  margin-left: 24px;
}
.env {
  margin: 0 12px 0 10px;
}
.letter {
  width: 30px;
  font: italic bold 17px/20px "Liberation Sans", sans-serif;
  color: #a3adff;
}
.bubble {
  margin-left: 18px;
  margin-right: -4px;
}
.collapse {
  display: block;
  margin: 6px auto 0;
}
.tip {
  position: absolute;
  left: 802px;
  top: 154px;
  width: 92px;
  padding: 3px 0;
  border-radius: 4px;
  background: #1a1a1a;
  color: #fff;
  font-weight: 700;
  text-align: center;
}
.tip::before {
  content: "";
  position: absolute;
  top: -5px;
  left: 41px;
  border: 5px solid transparent;
  border-top: 0;
  border-bottom-color: #1a1a1a;
}
.side-help {
  position: absolute;
  right: 0;
  top: 367px;
  width: 26px;
  height: 59px;
  padding: 10px 1px 0 5px;
  display: flex;
  flex-direction: column;
  gap: 7px;
  background: rgba(128, 195, 95, .8);
  border-radius: 6px 0 0 6px;
  box-shadow: 0 1px 4px #555;
  color: #a80808;
}
.side-help a {
  display: flex;
  color: inherit;
}
.chev {
  position: absolute;
  top: 402px;
  opacity: .65;
}
.chev.left {
  left: 26px;
}
.chev.right {
  right: 30px;
}
.toast {
  position: absolute;
  right: 11px;
  bottom: 41px;
  width: 284px;
  height: 63px;
  padding: 0 9px 0 15px;
  display: flex;
  align-items: center;
  border-radius: 3px;
  background: rgba(211, 48, 43, .86);
  box-shadow: 0 0 8px rgba(0, 0, 0, .4);
  color: #fff;
}
.toast strong {
  flex: 1;
  margin-left: 11px;
  font: 600 12px/17px Roboto, sans-serif;
}
.toast button {
  padding-bottom: 18px;
}
.pointer {
  position: absolute;
  left: 854px;
  top: 190px;
  filter: drop-shadow(1px 2px 3px rgba(0, 0, 0, .6));
  pointer-events: none;
}
</style>
